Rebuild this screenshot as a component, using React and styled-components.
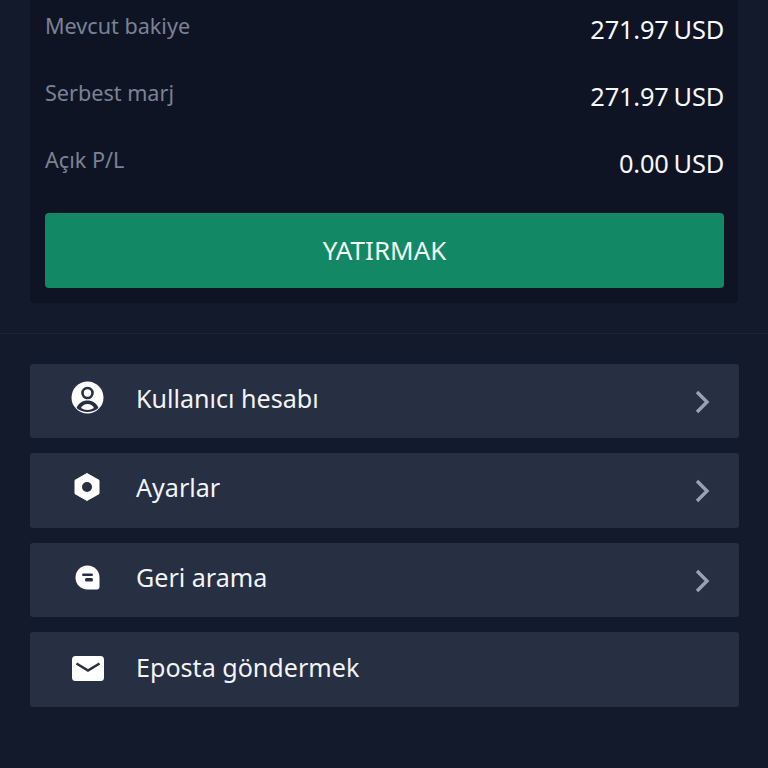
import React from "react";
import styled, { createGlobalStyle } from "styled-components";

const Global = createGlobalStyle`
  html, body { margin: 0; padding: 0; background: #121a2c; }
  body { font-family: "Noto Sans", sans-serif; overflow: hidden; }
`;
const Page = styled.div`
  width: 768px;
  height: 768px;
  overflow: hidden;
  background: #121a2c;
`;
const Summary = styled.section`
  margin: -6px 30px 0;
  padding: 0 14px 15px 15px;
  background: #0e1424;
  border-radius: 4px;
`;
const Stat = styled.div`
  display: flex;
  justify-content: space-between;
  height: 67px;
  padding-top: 17px;
  box-sizing: border-box;
`;
const StatLabel = styled.span`
  font-size: 21.6px;
  line-height: 30px;
  color: #7b8294;
`;
const StatValue = styled.span`
  display: flex;
  gap: 5px;
  margin-top: 3px;
  font-size: 25.4px;
  line-height: 30px;
  letter-spacing: -0.2px;
  color: #f7f8fa;
`;
const Deposit = styled.button`
  display: block;
  width: 100%;
  height: 74.5px;
  margin-top: 18px;
  padding: 0;
  border: 0;
  border-radius: 4px;
  background: #138864;
  color: #f4f8f7;
  font-family: inherit;
  font-size: 26px;
`;
const Divider = styled.hr`
  margin: 30px 0 30px;
  border: 0;
  height: 1px;
  background: #1d2436;
`;
const Menu = styled.nav`
  display: flex;
  flex-direction: column;
  gap: 15px;
  margin: 0 29px 0 30px;
`;
const Item = styled.div`
  display: flex;
  align-items: center;
  height: 74.67px;
  padding: 0 27px 0 41px;
  box-sizing: border-box;
  background: #272f43;
  border-radius: 3px;
`;
const IconSlot = styled.span`
  display: flex;
  width: 33px;
  height: 33px;
  justify-content: center;
  align-items: center;
  margin: -6px 32px 0 0;
`;
const ItemLabel = styled.span`
  flex: 1;
  margin-top: -6px;
  font-size: 25.1px;
  line-height: 32px;
  color: #f2f4f7;
`;
const Chevron = styled.svg`
  width: 18px;
  height: 26px;
  margin-top: 2px;
  fill: none;
  stroke: #9aa1b0;
  stroke-width: 3.4;
`;
const MailSvg = styled.svg`
  margin-top: 4px;
`;
const GearSvg = styled.svg`
  margin-right: 1px;
`;

const UserIcon = () => (
  <svg width="33" height="33" viewBox="0 0 33 33">
    <circle cx="16.5" cy="16.5" r="16" fill="#fff" />
    <circle cx="16.5" cy="12" r="5" fill="none" stroke="#272f43" strokeWidth="2.6" />
    <path d="M5.5 27c2-5 6-7.6 11-7.6s9 2.6 11 7.6c-3 2.8-7 4-11 4s-8-1.2-11-4z" fill="#272f43" />
    <path d="M10 27c1.4-2.6 3.6-4 6.5-4s5.100 1.400 6.500 4c-2 1.300-4.200 1.900-6.500 1.900S12 28.300 10 27z" fill="#fff" />
  </svg>
);
const GearIcon = () => (
  <GearSvg width="26" height="28" viewBox="0 0 26 28">
    <path d="M13 0.500 25 7.300v13.400L13 27.500 1 20.700V7.300z" fill="#fff" stroke="#fff" strokeLinejoin="round" />
    <circle cx="13" cy="14" r="5" fill="#272f43" />
  </GearSvg>
);
const CallbackIcon = () => (
  <svg width="25" height="25" viewBox="0 0 25 25">
    <path d="M12.500 0.500c6.800 0 12 5.200 12 12v9.500c0 1.500-1.200 2.500-2.500 2.500H12.500c-6.800 0-12-5.200-12-12s5.200-12 12-12z" fill="#fff" />
    <rect x="7" y="8.500" width="11" height="2.600" rx="1.300" fill="#272f43" />
    <rect x="10" y="13" width="8" height="3.400" rx="1.500" fill="#272f43" />
  </svg>
);
const MailIcon = () => (
  <MailSvg width="32" height="25" viewBox="0 0 32 25">
    <rect width="32" height="25" rx="3.500" fill="#fff" />
    <path d="M4.500 7.500 16 14.500l11.500-7" fill="none" stroke="#272f43" strokeWidth="2.600" />
  </MailSvg>
);

const stats = [
  ["Mevcut bakiye", "271.97"],
  ["Serbest marj", "271.97"],
  ["Açık P/L", "0.00"],
];
const items = [
  ["Kullanıcı hesabı", <UserIcon />, true],
  ["Ayarlar", <GearIcon />, true],
  ["Geri arama", <CallbackIcon />, true],
  ["Eposta göndermek", <MailIcon />, false],
];

export default function App() {
  return (
    <Page>
      <Global />
      <Summary>
        {stats.map(([label, value]) => (
          <Stat key={label}>
            <StatLabel>{label}</StatLabel>
            <StatValue>
              <span>{value}</span>
              <span>USD</span>
            </StatValue>
          </Stat>
        ))}
        <Deposit>YATIRMAK</Deposit>
      </Summary>
      <Divider />
      <Menu>
        {items.map(([label, icon, more]) => (
          <Item key={label}>
            <IconSlot>{icon}</IconSlot>
            <ItemLabel>{label}</ItemLabel>
            {more && (
              <Chevron viewBox="0 0 18 26">
                <path d="M3 3l10 10L3 23" />
              </Chevron>
            )}
          </Item>
        ))}
      </Menu>
    </Page>
  );
}
